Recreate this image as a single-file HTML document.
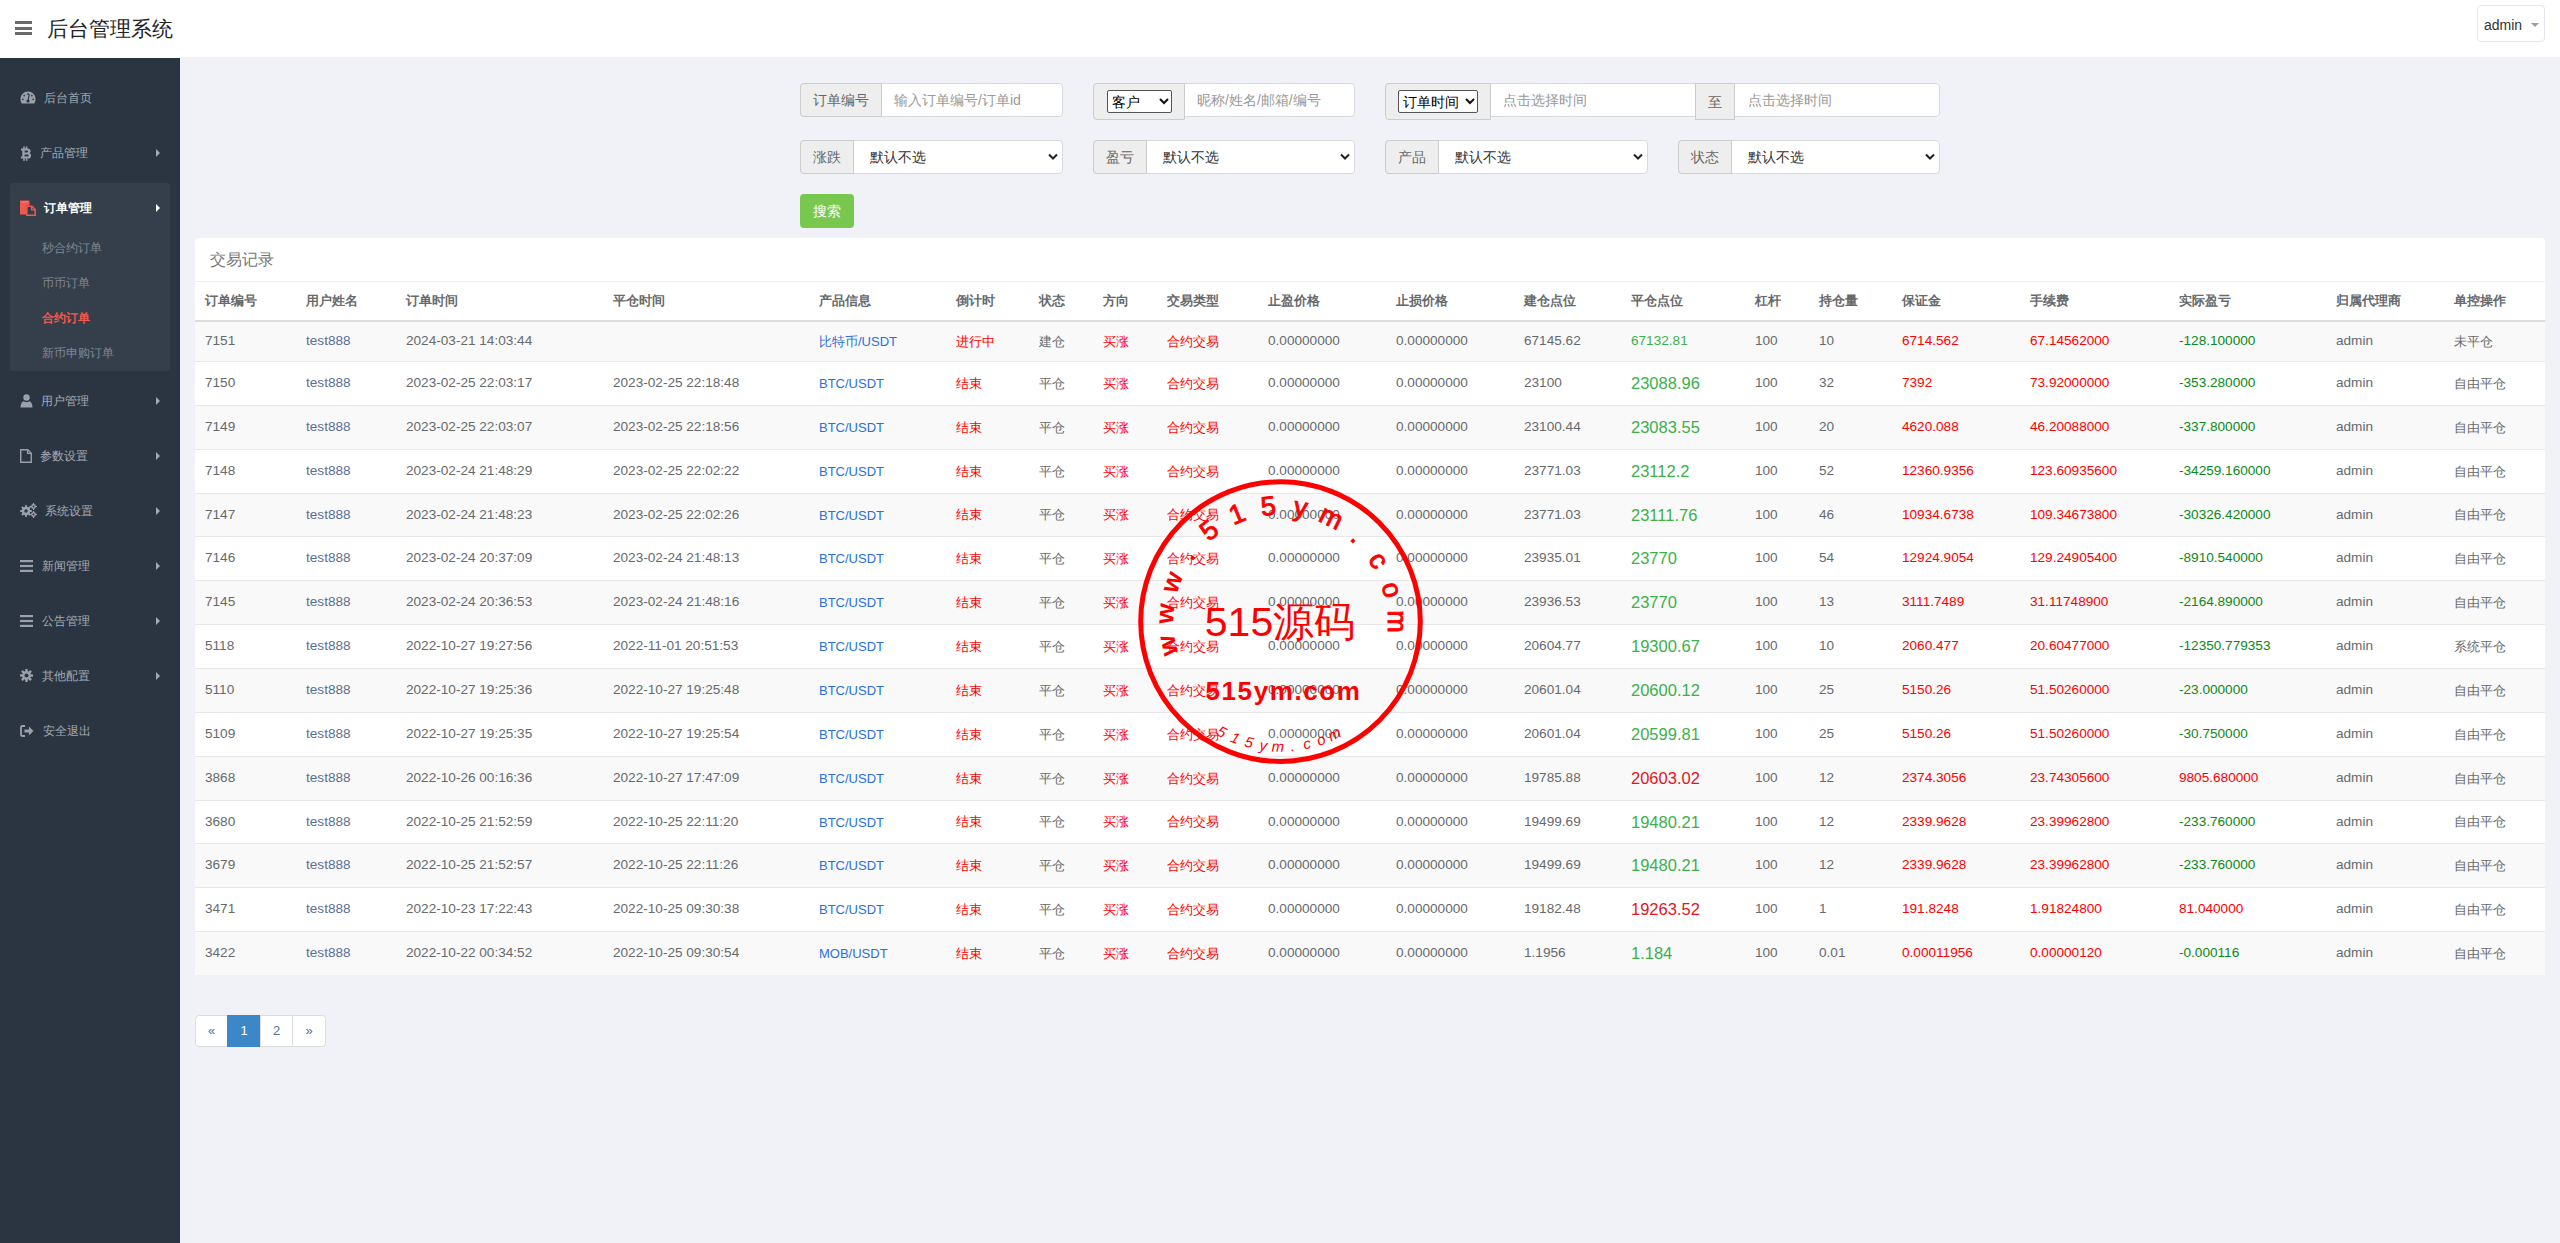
<!DOCTYPE html><html><head><meta charset="utf-8"><title>后台管理系统</title><style>
*{box-sizing:content-box}
html,body{margin:0;padding:0}
body{width:2560px;height:1243px;overflow:hidden;position:relative;background:#f0f2f7;font-family:"Liberation Sans",sans-serif;font-size:14px;color:#676a6c}
.hdr{position:absolute;left:0;top:0;width:2560px;height:57px;background:#fff}
.burger{position:absolute;left:15px;top:21px;width:17px;height:14px}
.burger i{position:absolute;left:0;width:17px;height:3px;background:#6a6a6a}
.title{position:absolute;left:47px;top:15px;font-size:21px;line-height:28px;color:#222}
.user{position:absolute;left:2477px;top:5px;width:66px;height:35px;border:1px solid #e4e6f0;border-radius:4px;background:#fff}
.user span{position:absolute;left:6px;top:11px;font-size:14px;line-height:16px;color:#333}
.user b{position:absolute;left:53px;top:17px;width:0;height:0;border-left:4px solid transparent;border-right:4px solid transparent;border-top:4px solid #9a9cb0}
.side{position:absolute;left:0;top:58px;width:180px;height:1185px;background:#2b3542}
.hl{position:absolute;left:0;top:57px;width:180px;height:1px;background:#fff}
.mi{position:absolute;left:0;width:180px;height:20px;font-size:12px;line-height:20px;color:#a4aab3}
.mi .ic{position:absolute;left:20px;top:2px;width:16px;height:16px}
.mi .tx{position:absolute;left:41px;top:0}
.mi .ar{position:absolute;left:156px;top:6px;width:0;height:0;border-top:4px solid transparent;border-bottom:4px solid transparent;border-left:4px solid #a4aab3}
.grp{position:absolute;left:10px;top:126px;width:160px;height:188px;background:#353f4c;border-radius:3px}
.sub{position:absolute;left:42px;font-size:12px;line-height:20px;color:#7f8893}
.sub.act{color:#f0594d;font-weight:bold}
.ig{position:absolute;height:34px;background:#fff;border:1px solid #d9d9d9;border-radius:4px;box-sizing:border-box}
.ig .ad{position:absolute;left:-1px;top:-1px;height:34px;background:#eee;border:1px solid #ccc;border-radius:4px 0 0 4px;box-sizing:border-box;color:#666;font-size:14px;line-height:32px;text-align:center}
.ig .ph{position:absolute;top:0;line-height:32px;color:#999;font-size:14px}
.ig .sv{position:absolute;top:0;line-height:32px;color:#333;font-size:14px}
.ig .chev{position:absolute;top:12px;width:10px;height:8px}
.nsel{position:absolute;top:6px;height:23px;border:1px solid #555;border-radius:2px;background:#fff;box-sizing:border-box;color:#000;font-size:14px;line-height:20px}
.nsel span{position:absolute;left:4px;top:1px}
.nsel svg{position:absolute;top:7px}
.btn{position:absolute;left:800px;top:194px;width:54px;height:34px;background:#78c850;border-radius:4px;color:#fff;font-size:14px;line-height:34px;text-align:center}
.panel{position:absolute;left:195px;top:238px;width:2350px;height:737px;background:#fff;border-radius:4px 4px 0 0}
.panel .ph{position:absolute;left:0;top:0;width:2350px;height:43px;border-bottom:1px solid #eef0f5;font-size:16px;line-height:43px;color:#777;text-indent:15px}
.thead .c{font-size:13px;top:0}
.thead{position:absolute;left:0;top:44px;width:2350px;height:38px;border-bottom:2px solid #ddd;display:flex;font-weight:bold;color:#676a6c;line-height:38px;font-size:13px}
.tr{position:absolute;left:0;width:2350px;display:flex;border-bottom:1px solid #e7e7e7;align-items:center}
.tr:last-child{border-bottom:0}
.tr.odd{background:#f9f9f9}
.tr.even{background:#fff}
.c{box-sizing:border-box;padding-left:10px;white-space:nowrap;overflow:visible;font-size:13.6px;position:relative;top:-1px}
.c.u{color:#5a6f92}
.c.b{color:#2a6fe0;font-size:13px;top:0}
.c.r{color:#f00}
.c.cpg{color:#3cb04a}
.c.cpr{color:#e5141e}
.c.zh{font-size:13px;top:0}
.c.big{font-size:16.5px;top:0}
.c.pg{color:#0a8a1a}
.c.pr{color:#f00}

.pager{position:absolute;left:195px;top:1015px;height:32px;display:flex}
.pager div{height:30px;border:1px solid #ddd;margin-left:-1px;background:#fff;line-height:30px;text-align:center;font-size:13px;color:#5a6f92;box-sizing:content-box}
.pager div:first-child{margin-left:0;border-radius:4px 0 0 4px}
.pager div:last-child{border-radius:0 4px 4px 0}
.pager div.act{background:#3c87c8;border-color:#3c87c8;color:#fff}
.stamp{position:absolute;left:1130px;top:470px;width:300px;height:300px}

</style></head><body>
<div class="hdr">
  <div class="burger"><i style="top:0"></i><i style="top:6px"></i><i style="top:11px"></i></div>
  <div class="title">后台管理系统</div>
  <div class="user"><span>admin</span><b></b></div>
</div>
<div class="side"></div><div class="hl"></div>
<!-- sidebar menu -->
<div class="mi" style="top:88px">
  <svg class="ic" style="left:20px;top:3px;width:16px;height:13px" viewBox="0 0 16 13"><path d="M8 0.5C3.9 0.5 0.5 3.8 0.5 8c0 1.9 0.5 3.3 1.2 4.5h12.6c0.7-1.2 1.2-2.6 1.2-4.5C15.5 3.8 12.1 0.5 8 0.5z" fill="#9aa1ab"/><circle cx="8" cy="3" r="0.9" fill="#2b3542"/><circle cx="4.2" cy="4.6" r="0.9" fill="#2b3542"/><circle cx="11.8" cy="4.6" r="0.9" fill="#2b3542"/><circle cx="2.8" cy="8.3" r="0.9" fill="#2b3542"/><circle cx="13.2" cy="8.3" r="0.9" fill="#2b3542"/><path d="M9.3 3.2L8.2 9" stroke="#2b3542" stroke-width="1.1"/><circle cx="8" cy="10" r="1.6" fill="#2b3542"/></svg>
  <span class="tx" style="left:44px">后台首页</span>
</div>
<div class="mi" style="top:143px">
  <svg class="ic" style="left:20px;top:3px;width:12px;height:15px" viewBox="0 0 12 15"><path d="M1 2.5h6.2c2.2 0 3.4 1 3.4 2.7 0 1.1-0.6 1.8-1.5 2.1 1.2 0.3 2 1.1 2 2.4 0 1.9-1.4 2.9-3.7 2.9H1v-2h1.3V4.5H1z M4.6 4.5v2.1h2.2c0.9 0 1.3-0.4 1.3-1.05S7.7 4.5 6.8 4.5z M4.6 8.5v2.1h2.5c1 0 1.5-0.4 1.5-1.05S8.1 8.5 7.1 8.5z" fill="#9aa1ab" fill-rule="evenodd"/><rect x="3.2" y="0.5" width="1.6" height="2.5" fill="#9aa1ab"/><rect x="5.8" y="0.5" width="1.6" height="2.5" fill="#9aa1ab"/><rect x="3.2" y="12.3" width="1.6" height="2.5" fill="#9aa1ab"/><rect x="5.8" y="12.3" width="1.6" height="2.5" fill="#9aa1ab"/></svg>
  <span class="tx" style="left:40px">产品管理</span><i class="ar"></i>
</div>
<div class="grp" style="top:183px"></div>
<div class="mi" style="top:198px">
  <svg class="ic" style="left:20px;top:2px;width:16px;height:16px" viewBox="0 0 16 16"><path d="M0 0.5h9.5v5H6v9H0z" fill="#f0594d"/><path d="M6.8 6.3h5.2l3.2 3.2v5.8H6.8z" fill="#353f4c" stroke="#f0594d" stroke-width="1.5"/><path d="M11.6 6.5v3.3h3.3" fill="none" stroke="#f0594d" stroke-width="1.3"/><rect x="1.5" y="1.5" width="6.5" height="0.9" fill="#ff8a80"/></svg>
  <span class="tx" style="left:44px;color:#fff;font-weight:bold">订单管理</span><i class="ar" style="border-left-color:#fff"></i>
</div>
<div class="sub" style="top:238px">秒合约订单</div>
<div class="sub" style="top:273px">币币订单</div>
<div class="sub act" style="top:308px">合约订单</div>
<div class="sub" style="top:343px">新币申购订单</div>
<div class="mi" style="top:391px">
  <svg class="ic" style="left:20px;top:3px;width:13px;height:14px" viewBox="0 0 13 14"><circle cx="6.5" cy="3.5" r="3.2" fill="#9aa1ab"/><path d="M0.5 13.5c0-4 1.6-6 3.2-6.3 0.8 0.6 1.7 0.9 2.8 0.9s2-0.3 2.8-0.9c1.6 0.3 3.2 2.3 3.2 6.3z" fill="#9aa1ab"/></svg>
  <span class="tx" style="left:41px">用户管理</span><i class="ar"></i>
</div>
<div class="mi" style="top:446px">
  <svg class="ic" style="left:20px;top:3px;width:12px;height:14px" viewBox="0 0 12 14"><path d="M0.75 0.75h7l3.5 3.5v9h-10.5z" fill="none" stroke="#9aa1ab" stroke-width="1.4"/><path d="M7.5 0.75v3.7h3.7" fill="none" stroke="#9aa1ab" stroke-width="1.2"/></svg>
  <span class="tx" style="left:40px">参数设置</span><i class="ar"></i>
</div>
<div class="mi" style="top:501px">
  <svg class="ic" style="left:20px;top:2px;width:17px;height:15px" viewBox="0 0 17 15"><g fill="#9aa1ab"><circle cx="6" cy="8" r="4.3"/><rect x="5" y="2.2" width="2" height="11.6"/><rect x="0.2" y="7" width="11.6" height="2"/><rect x="5" y="2.2" width="2" height="11.6" transform="rotate(45 6 8)"/><rect x="5" y="2.2" width="2" height="11.6" transform="rotate(-45 6 8)"/><circle cx="13.5" cy="3.5" r="2.4"/><rect x="12.9" y="0" width="1.2" height="7"/><rect x="10" y="2.9" width="7" height="1.2"/><circle cx="13.5" cy="11.5" r="2.4"/><rect x="12.9" y="8" width="1.2" height="7"/><rect x="10" y="10.9" width="7" height="1.2"/></g><circle cx="6" cy="8" r="1.7" fill="#2b3542"/><circle cx="13.5" cy="3.5" r="0.9" fill="#2b3542"/><circle cx="13.5" cy="11.5" r="0.9" fill="#2b3542"/></svg>
  <span class="tx" style="left:45px">系统设置</span><i class="ar"></i>
</div>
<div class="mi" style="top:556px">
  <svg class="ic" style="left:20px;top:4px;width:13px;height:12px" viewBox="0 0 13 12"><rect y="0" width="13" height="2.2" fill="#9aa1ab"/><rect y="4.9" width="13" height="2.2" fill="#9aa1ab"/><rect y="9.8" width="13" height="2.2" fill="#9aa1ab"/></svg>
  <span class="tx" style="left:42px">新闻管理</span><i class="ar"></i>
</div>
<div class="mi" style="top:611px">
  <svg class="ic" style="left:20px;top:4px;width:13px;height:12px" viewBox="0 0 13 12"><rect y="0" width="13" height="2.2" fill="#9aa1ab"/><rect y="4.9" width="13" height="2.2" fill="#9aa1ab"/><rect y="9.8" width="13" height="2.2" fill="#9aa1ab"/></svg>
  <span class="tx" style="left:42px">公告管理</span><i class="ar"></i>
</div>
<div class="mi" style="top:666px">
  <svg class="ic" style="left:20px;top:3px;width:13px;height:13px" viewBox="0 0 13 13"><g fill="#9aa1ab"><circle cx="6.5" cy="6.5" r="4.4"/><rect x="5.3" y="0" width="2.4" height="13"/><rect x="0" y="5.3" width="13" height="2.4"/><rect x="5.3" y="0" width="2.4" height="13" transform="rotate(45 6.5 6.5)"/><rect x="5.3" y="0" width="2.4" height="13" transform="rotate(-45 6.5 6.5)"/></g><circle cx="6.5" cy="6.5" r="2" fill="#2b3542"/></svg>
  <span class="tx" style="left:42px">其他配置</span><i class="ar"></i>
</div>
<div class="mi" style="top:721px">
  <svg class="ic" style="left:20px;top:4px;width:14px;height:12px" viewBox="0 0 14 12"><path d="M5 1H2.2C1.5 1 1 1.5 1 2.2v7.6C1 10.5 1.5 11 2.2 11H5" fill="none" stroke="#9aa1ab" stroke-width="1.8"/><path d="M4.5 4.5h4.5V1.5L13.5 6 9 10.5V7.5H4.5z" fill="#9aa1ab"/></svg>
  <span class="tx" style="left:43px">安全退出</span>
</div>

<!-- filter form -->
<div class="ig" style="left:800px;top:83px;width:263px">
  <div class="ad" style="width:82px">订单编号</div>
  <div class="ph" style="left:93px">输入订单编号/订单id</div>
</div>
<div class="ig" style="left:1093px;top:83px;width:262px">
  <div class="ad" style="width:92px;height:37px"></div>
  <div class="nsel" style="left:13px;width:65px"><span>客户</span><svg style="left:51px" width="10" height="7" viewBox="0 0 10 7"><path d="M1 1l4 4 4-4" fill="none" stroke="#111" stroke-width="2"/></svg></div>
  <div class="ph" style="left:103px">昵称/姓名/邮箱/编号</div>
</div>
<div class="ig" style="left:1385px;top:83px;width:555px">
  <div class="ad" style="width:106px;height:37px"></div>
  <div class="nsel" style="left:12px;width:80px"><span>订单时间</span><svg style="left:66px" width="10" height="7" viewBox="0 0 10 7"><path d="M1 1l4 4 4-4" fill="none" stroke="#111" stroke-width="2"/></svg></div>
  <div class="ph" style="left:117px">点击选择时间</div>
  <div class="ad" style="left:309px;width:40px;height:37px;border-radius:0;line-height:36px">至</div>
  <div class="ph" style="left:362px">点击选择时间</div>
</div>

<div class="ig" style="left:800px;top:140px;width:263px">
  <div class="ad" style="width:54px">涨跌</div>
  <div class="sv" style="left:69px">默认不选</div>
  <svg class="chev" style="left:247px" viewBox="0 0 10 8"><path d="M1 1.5l4 4 4-4" fill="none" stroke="#222" stroke-width="2"/></svg>
</div>
<div class="ig" style="left:1093px;top:140px;width:262px">
  <div class="ad" style="width:54px">盈亏</div>
  <div class="sv" style="left:69px">默认不选</div>
  <svg class="chev" style="left:246px" viewBox="0 0 10 8"><path d="M1 1.5l4 4 4-4" fill="none" stroke="#222" stroke-width="2"/></svg>
</div>
<div class="ig" style="left:1385px;top:140px;width:263px">
  <div class="ad" style="width:54px">产品</div>
  <div class="sv" style="left:69px">默认不选</div>
  <svg class="chev" style="left:247px" viewBox="0 0 10 8"><path d="M1 1.5l4 4 4-4" fill="none" stroke="#222" stroke-width="2"/></svg>
</div>
<div class="ig" style="left:1678px;top:140px;width:262px">
  <div class="ad" style="width:54px">状态</div>
  <div class="sv" style="left:69px">默认不选</div>
  <svg class="chev" style="left:246px" viewBox="0 0 10 8"><path d="M1 1.5l4 4 4-4" fill="none" stroke="#222" stroke-width="2"/></svg>
</div>
<div class="btn">搜索</div>

<div class="panel"><div class="ph">交易记录</div>
<div class="thead"><div class="c" style="width:101px">订单编号</div><div class="c" style="width:100px">用户姓名</div><div class="c" style="width:207px">订单时间</div><div class="c" style="width:206px">平仓时间</div><div class="c" style="width:137px">产品信息</div><div class="c" style="width:83px">倒计时</div><div class="c" style="width:64px">状态</div><div class="c" style="width:64px">方向</div><div class="c" style="width:101px">交易类型</div><div class="c" style="width:128px">止盈价格</div><div class="c" style="width:128px">止损价格</div><div class="c" style="width:107px">建仓点位</div><div class="c" style="width:124px">平仓点位</div><div class="c" style="width:64px">杠杆</div><div class="c" style="width:83px">持仓量</div><div class="c" style="width:128px">保证金</div><div class="c" style="width:149px">手续费</div><div class="c" style="width:157px">实际盈亏</div><div class="c" style="width:118px">归属代理商</div><div class="c" style="width:101px">单控操作</div></div>
<div class="tr odd" style="top:84px;height:39px"><div class="c " style="width:101px">7151</div><div class="c u" style="width:100px">test888</div><div class="c " style="width:207px">2024-03-21 14:03:44</div><div class="c " style="width:206px"></div><div class="c b" style="width:137px">比特币/USDT</div><div class="c r zh" style="width:83px">进行中</div><div class="c zh" style="width:64px">建仓</div><div class="c r zh" style="width:64px">买涨</div><div class="c r zh" style="width:101px">合约交易</div><div class="c " style="width:128px">0.00000000</div><div class="c " style="width:128px">0.00000000</div><div class="c " style="width:107px">67145.62</div><div class="c cpg" style="width:124px">67132.81</div><div class="c " style="width:64px">100</div><div class="c " style="width:83px">10</div><div class="c r" style="width:128px">6714.562</div><div class="c r" style="width:149px">67.14562000</div><div class="c pg" style="width:157px">-128.100000</div><div class="c " style="width:118px">admin</div><div class="c zh" style="width:101px">未平仓</div></div>
<div class="tr even" style="top:124px;height:43px"><div class="c " style="width:101px">7150</div><div class="c u" style="width:100px">test888</div><div class="c " style="width:207px">2023-02-25 22:03:17</div><div class="c " style="width:206px">2023-02-25 22:18:48</div><div class="c b" style="width:137px">BTC/USDT</div><div class="c r zh" style="width:83px">结束</div><div class="c zh" style="width:64px">平仓</div><div class="c r zh" style="width:64px">买涨</div><div class="c r zh" style="width:101px">合约交易</div><div class="c " style="width:128px">0.00000000</div><div class="c " style="width:128px">0.00000000</div><div class="c " style="width:107px">23100</div><div class="c cpg big" style="width:124px">23088.96</div><div class="c " style="width:64px">100</div><div class="c " style="width:83px">32</div><div class="c r" style="width:128px">7392</div><div class="c r" style="width:149px">73.92000000</div><div class="c pg" style="width:157px">-353.280000</div><div class="c " style="width:118px">admin</div><div class="c zh" style="width:101px">自由平仓</div></div>
<div class="tr odd" style="top:168px;height:43px"><div class="c " style="width:101px">7149</div><div class="c u" style="width:100px">test888</div><div class="c " style="width:207px">2023-02-25 22:03:07</div><div class="c " style="width:206px">2023-02-25 22:18:56</div><div class="c b" style="width:137px">BTC/USDT</div><div class="c r zh" style="width:83px">结束</div><div class="c zh" style="width:64px">平仓</div><div class="c r zh" style="width:64px">买涨</div><div class="c r zh" style="width:101px">合约交易</div><div class="c " style="width:128px">0.00000000</div><div class="c " style="width:128px">0.00000000</div><div class="c " style="width:107px">23100.44</div><div class="c cpg big" style="width:124px">23083.55</div><div class="c " style="width:64px">100</div><div class="c " style="width:83px">20</div><div class="c r" style="width:128px">4620.088</div><div class="c r" style="width:149px">46.20088000</div><div class="c pg" style="width:157px">-337.800000</div><div class="c " style="width:118px">admin</div><div class="c zh" style="width:101px">自由平仓</div></div>
<div class="tr even" style="top:212px;height:43px"><div class="c " style="width:101px">7148</div><div class="c u" style="width:100px">test888</div><div class="c " style="width:207px">2023-02-24 21:48:29</div><div class="c " style="width:206px">2023-02-25 22:02:22</div><div class="c b" style="width:137px">BTC/USDT</div><div class="c r zh" style="width:83px">结束</div><div class="c zh" style="width:64px">平仓</div><div class="c r zh" style="width:64px">买涨</div><div class="c r zh" style="width:101px">合约交易</div><div class="c " style="width:128px">0.00000000</div><div class="c " style="width:128px">0.00000000</div><div class="c " style="width:107px">23771.03</div><div class="c cpg big" style="width:124px">23112.2</div><div class="c " style="width:64px">100</div><div class="c " style="width:83px">52</div><div class="c r" style="width:128px">12360.9356</div><div class="c r" style="width:149px">123.60935600</div><div class="c pg" style="width:157px">-34259.160000</div><div class="c " style="width:118px">admin</div><div class="c zh" style="width:101px">自由平仓</div></div>
<div class="tr odd" style="top:256px;height:42px"><div class="c " style="width:101px">7147</div><div class="c u" style="width:100px">test888</div><div class="c " style="width:207px">2023-02-24 21:48:23</div><div class="c " style="width:206px">2023-02-25 22:02:26</div><div class="c b" style="width:137px">BTC/USDT</div><div class="c r zh" style="width:83px">结束</div><div class="c zh" style="width:64px">平仓</div><div class="c r zh" style="width:64px">买涨</div><div class="c r zh" style="width:101px">合约交易</div><div class="c " style="width:128px">0.00000000</div><div class="c " style="width:128px">0.00000000</div><div class="c " style="width:107px">23771.03</div><div class="c cpg big" style="width:124px">23111.76</div><div class="c " style="width:64px">100</div><div class="c " style="width:83px">46</div><div class="c r" style="width:128px">10934.6738</div><div class="c r" style="width:149px">109.34673800</div><div class="c pg" style="width:157px">-30326.420000</div><div class="c " style="width:118px">admin</div><div class="c zh" style="width:101px">自由平仓</div></div>
<div class="tr even" style="top:299px;height:43px"><div class="c " style="width:101px">7146</div><div class="c u" style="width:100px">test888</div><div class="c " style="width:207px">2023-02-24 20:37:09</div><div class="c " style="width:206px">2023-02-24 21:48:13</div><div class="c b" style="width:137px">BTC/USDT</div><div class="c r zh" style="width:83px">结束</div><div class="c zh" style="width:64px">平仓</div><div class="c r zh" style="width:64px">买涨</div><div class="c r zh" style="width:101px">合约交易</div><div class="c " style="width:128px">0.00000000</div><div class="c " style="width:128px">0.00000000</div><div class="c " style="width:107px">23935.01</div><div class="c cpg big" style="width:124px">23770</div><div class="c " style="width:64px">100</div><div class="c " style="width:83px">54</div><div class="c r" style="width:128px">12924.9054</div><div class="c r" style="width:149px">129.24905400</div><div class="c pg" style="width:157px">-8910.540000</div><div class="c " style="width:118px">admin</div><div class="c zh" style="width:101px">自由平仓</div></div>
<div class="tr odd" style="top:343px;height:43px"><div class="c " style="width:101px">7145</div><div class="c u" style="width:100px">test888</div><div class="c " style="width:207px">2023-02-24 20:36:53</div><div class="c " style="width:206px">2023-02-24 21:48:16</div><div class="c b" style="width:137px">BTC/USDT</div><div class="c r zh" style="width:83px">结束</div><div class="c zh" style="width:64px">平仓</div><div class="c r zh" style="width:64px">买涨</div><div class="c r zh" style="width:101px">合约交易</div><div class="c " style="width:128px">0.00000000</div><div class="c " style="width:128px">0.00000000</div><div class="c " style="width:107px">23936.53</div><div class="c cpg big" style="width:124px">23770</div><div class="c " style="width:64px">100</div><div class="c " style="width:83px">13</div><div class="c r" style="width:128px">3111.7489</div><div class="c r" style="width:149px">31.11748900</div><div class="c pg" style="width:157px">-2164.890000</div><div class="c " style="width:118px">admin</div><div class="c zh" style="width:101px">自由平仓</div></div>
<div class="tr even" style="top:387px;height:43px"><div class="c " style="width:101px">5118</div><div class="c u" style="width:100px">test888</div><div class="c " style="width:207px">2022-10-27 19:27:56</div><div class="c " style="width:206px">2022-11-01 20:51:53</div><div class="c b" style="width:137px">BTC/USDT</div><div class="c r zh" style="width:83px">结束</div><div class="c zh" style="width:64px">平仓</div><div class="c r zh" style="width:64px">买涨</div><div class="c r zh" style="width:101px">合约交易</div><div class="c " style="width:128px">0.00000000</div><div class="c " style="width:128px">0.00000000</div><div class="c " style="width:107px">20604.77</div><div class="c cpg big" style="width:124px">19300.67</div><div class="c " style="width:64px">100</div><div class="c " style="width:83px">10</div><div class="c r" style="width:128px">2060.477</div><div class="c r" style="width:149px">20.60477000</div><div class="c pg" style="width:157px">-12350.779353</div><div class="c " style="width:118px">admin</div><div class="c zh" style="width:101px">系统平仓</div></div>
<div class="tr odd" style="top:431px;height:43px"><div class="c " style="width:101px">5110</div><div class="c u" style="width:100px">test888</div><div class="c " style="width:207px">2022-10-27 19:25:36</div><div class="c " style="width:206px">2022-10-27 19:25:48</div><div class="c b" style="width:137px">BTC/USDT</div><div class="c r zh" style="width:83px">结束</div><div class="c zh" style="width:64px">平仓</div><div class="c r zh" style="width:64px">买涨</div><div class="c r zh" style="width:101px">合约交易</div><div class="c " style="width:128px">0.00000000</div><div class="c " style="width:128px">0.00000000</div><div class="c " style="width:107px">20601.04</div><div class="c cpg big" style="width:124px">20600.12</div><div class="c " style="width:64px">100</div><div class="c " style="width:83px">25</div><div class="c r" style="width:128px">5150.26</div><div class="c r" style="width:149px">51.50260000</div><div class="c pg" style="width:157px">-23.000000</div><div class="c " style="width:118px">admin</div><div class="c zh" style="width:101px">自由平仓</div></div>
<div class="tr even" style="top:475px;height:43px"><div class="c " style="width:101px">5109</div><div class="c u" style="width:100px">test888</div><div class="c " style="width:207px">2022-10-27 19:25:35</div><div class="c " style="width:206px">2022-10-27 19:25:54</div><div class="c b" style="width:137px">BTC/USDT</div><div class="c r zh" style="width:83px">结束</div><div class="c zh" style="width:64px">平仓</div><div class="c r zh" style="width:64px">买涨</div><div class="c r zh" style="width:101px">合约交易</div><div class="c " style="width:128px">0.00000000</div><div class="c " style="width:128px">0.00000000</div><div class="c " style="width:107px">20601.04</div><div class="c cpg big" style="width:124px">20599.81</div><div class="c " style="width:64px">100</div><div class="c " style="width:83px">25</div><div class="c r" style="width:128px">5150.26</div><div class="c r" style="width:149px">51.50260000</div><div class="c pg" style="width:157px">-30.750000</div><div class="c " style="width:118px">admin</div><div class="c zh" style="width:101px">自由平仓</div></div>
<div class="tr odd" style="top:519px;height:43px"><div class="c " style="width:101px">3868</div><div class="c u" style="width:100px">test888</div><div class="c " style="width:207px">2022-10-26 00:16:36</div><div class="c " style="width:206px">2022-10-27 17:47:09</div><div class="c b" style="width:137px">BTC/USDT</div><div class="c r zh" style="width:83px">结束</div><div class="c zh" style="width:64px">平仓</div><div class="c r zh" style="width:64px">买涨</div><div class="c r zh" style="width:101px">合约交易</div><div class="c " style="width:128px">0.00000000</div><div class="c " style="width:128px">0.00000000</div><div class="c " style="width:107px">19785.88</div><div class="c cpr big" style="width:124px">20603.02</div><div class="c " style="width:64px">100</div><div class="c " style="width:83px">12</div><div class="c r" style="width:128px">2374.3056</div><div class="c r" style="width:149px">23.74305600</div><div class="c pr" style="width:157px">9805.680000</div><div class="c " style="width:118px">admin</div><div class="c zh" style="width:101px">自由平仓</div></div>
<div class="tr even" style="top:563px;height:42px"><div class="c " style="width:101px">3680</div><div class="c u" style="width:100px">test888</div><div class="c " style="width:207px">2022-10-25 21:52:59</div><div class="c " style="width:206px">2022-10-25 22:11:20</div><div class="c b" style="width:137px">BTC/USDT</div><div class="c r zh" style="width:83px">结束</div><div class="c zh" style="width:64px">平仓</div><div class="c r zh" style="width:64px">买涨</div><div class="c r zh" style="width:101px">合约交易</div><div class="c " style="width:128px">0.00000000</div><div class="c " style="width:128px">0.00000000</div><div class="c " style="width:107px">19499.69</div><div class="c cpg big" style="width:124px">19480.21</div><div class="c " style="width:64px">100</div><div class="c " style="width:83px">12</div><div class="c r" style="width:128px">2339.9628</div><div class="c r" style="width:149px">23.39962800</div><div class="c pg" style="width:157px">-233.760000</div><div class="c " style="width:118px">admin</div><div class="c zh" style="width:101px">自由平仓</div></div>
<div class="tr odd" style="top:606px;height:43px"><div class="c " style="width:101px">3679</div><div class="c u" style="width:100px">test888</div><div class="c " style="width:207px">2022-10-25 21:52:57</div><div class="c " style="width:206px">2022-10-25 22:11:26</div><div class="c b" style="width:137px">BTC/USDT</div><div class="c r zh" style="width:83px">结束</div><div class="c zh" style="width:64px">平仓</div><div class="c r zh" style="width:64px">买涨</div><div class="c r zh" style="width:101px">合约交易</div><div class="c " style="width:128px">0.00000000</div><div class="c " style="width:128px">0.00000000</div><div class="c " style="width:107px">19499.69</div><div class="c cpg big" style="width:124px">19480.21</div><div class="c " style="width:64px">100</div><div class="c " style="width:83px">12</div><div class="c r" style="width:128px">2339.9628</div><div class="c r" style="width:149px">23.39962800</div><div class="c pg" style="width:157px">-233.760000</div><div class="c " style="width:118px">admin</div><div class="c zh" style="width:101px">自由平仓</div></div>
<div class="tr even" style="top:650px;height:43px"><div class="c " style="width:101px">3471</div><div class="c u" style="width:100px">test888</div><div class="c " style="width:207px">2022-10-23 17:22:43</div><div class="c " style="width:206px">2022-10-25 09:30:38</div><div class="c b" style="width:137px">BTC/USDT</div><div class="c r zh" style="width:83px">结束</div><div class="c zh" style="width:64px">平仓</div><div class="c r zh" style="width:64px">买涨</div><div class="c r zh" style="width:101px">合约交易</div><div class="c " style="width:128px">0.00000000</div><div class="c " style="width:128px">0.00000000</div><div class="c " style="width:107px">19182.48</div><div class="c cpr big" style="width:124px">19263.52</div><div class="c " style="width:64px">100</div><div class="c " style="width:83px">1</div><div class="c r" style="width:128px">191.8248</div><div class="c r" style="width:149px">1.91824800</div><div class="c pr" style="width:157px">81.040000</div><div class="c " style="width:118px">admin</div><div class="c zh" style="width:101px">自由平仓</div></div>
<div class="tr odd" style="top:694px;height:43px"><div class="c " style="width:101px">3422</div><div class="c u" style="width:100px">test888</div><div class="c " style="width:207px">2022-10-22 00:34:52</div><div class="c " style="width:206px">2022-10-25 09:30:54</div><div class="c b" style="width:137px">MOB/USDT</div><div class="c r zh" style="width:83px">结束</div><div class="c zh" style="width:64px">平仓</div><div class="c r zh" style="width:64px">买涨</div><div class="c r zh" style="width:101px">合约交易</div><div class="c " style="width:128px">0.00000000</div><div class="c " style="width:128px">0.00000000</div><div class="c " style="width:107px">1.1956</div><div class="c cpg big" style="width:124px">1.184</div><div class="c " style="width:64px">100</div><div class="c " style="width:83px">0.01</div><div class="c r" style="width:128px">0.00011956</div><div class="c r" style="width:149px">0.00000120</div><div class="c pg" style="width:157px">-0.000116</div><div class="c " style="width:118px">admin</div><div class="c zh" style="width:101px">自由平仓</div></div>
</div>
<div class="pager">
  <div style="width:31px">&laquo;</div>
  <div class="act" style="width:32px">1</div>
  <div style="width:31px">2</div>
  <div style="width:32px">&raquo;</div>
</div>

<svg class="stamp" viewBox="0 0 300 300" width="300" height="300">
<circle cx="150.5" cy="151.6" r="139.8" fill="none" stroke="#f00" stroke-width="5"/>
<text transform="translate(45.8 173.8) rotate(258.0)" text-anchor="middle" font-family="Liberation Sans" font-size="26" font-weight="bold" fill="#f00" stroke="#f00" stroke-width="0">w</text>
<text transform="translate(43.8 144.1) rotate(274.0)" text-anchor="middle" font-family="Liberation Sans" font-size="26" font-weight="bold" fill="#f00" stroke="#f00" stroke-width="0">w</text>
<text transform="translate(50.0 115.0) rotate(290.0)" text-anchor="middle" font-family="Liberation Sans" font-size="26" font-weight="bold" fill="#f00" stroke="#f00" stroke-width="0">w</text>
<text transform="translate(63.9 88.7) rotate(306.0)" text-anchor="middle" font-family="Liberation Sans" font-size="27" font-weight="normal" fill="#f00" stroke="#f00" stroke-width="0.9">.</text>
<text transform="translate(84.6 67.3) rotate(322.0)" text-anchor="middle" font-family="Liberation Sans" font-size="27" font-weight="normal" fill="#f00" stroke="#f00" stroke-width="0.9">5</text>
<text transform="translate(110.4 52.4) rotate(338.0)" text-anchor="middle" font-family="Liberation Sans" font-size="27" font-weight="normal" fill="#f00" stroke="#f00" stroke-width="0.9">1</text>
<text transform="translate(139.3 45.2) rotate(354.0)" text-anchor="middle" font-family="Liberation Sans" font-size="27" font-weight="normal" fill="#f00" stroke="#f00" stroke-width="0.9">5</text>
<text transform="translate(169.1 46.2) rotate(370.0)" text-anchor="middle" font-family="Liberation Sans" font-size="27" font-weight="normal" fill="#f00" stroke="#f00" stroke-width="0.9">y</text>
<text transform="translate(197.4 55.4) rotate(386.0)" text-anchor="middle" font-family="Liberation Sans" font-size="27" font-weight="normal" fill="#f00" stroke="#f00" stroke-width="0.9">m</text>
<text transform="translate(222.1 72.1) rotate(402.0)" text-anchor="middle" font-family="Liberation Sans" font-size="27" font-weight="normal" fill="#f00" stroke="#f00" stroke-width="0.9">.</text>
<text transform="translate(241.2 94.9) rotate(418.0)" text-anchor="middle" font-family="Liberation Sans" font-size="27" font-weight="normal" fill="#f00" stroke="#f00" stroke-width="0.9">c</text>
<text transform="translate(253.4 122.1) rotate(434.0)" text-anchor="middle" font-family="Liberation Sans" font-size="27" font-weight="normal" fill="#f00" stroke="#f00" stroke-width="0.9">o</text>
<text transform="translate(257.5 151.6) rotate(450.0)" text-anchor="middle" font-family="Liberation Sans" font-size="27" font-weight="normal" fill="#f00" stroke="#f00" stroke-width="0.9">m</text>
<text x="150.0" y="166" text-anchor="middle" font-family="Liberation Sans" font-size="41" fill="#f00">515源码</text>
<text x="153.5" y="229.5" text-anchor="middle" font-family="Liberation Sans" font-size="26" font-weight="bold" fill="#f00" letter-spacing="1.6">515ym.com</text>
<text transform="translate(89.5 266.4) rotate(28.0)" text-anchor="middle" font-family="Liberation Sans" font-size="15" font-style="italic" fill="#f00">5</text>
<text transform="translate(103.3 272.7) rotate(21.3)" text-anchor="middle" font-family="Liberation Sans" font-size="15" font-style="italic" fill="#f00">1</text>
<text transform="translate(117.7 277.4) rotate(14.6)" text-anchor="middle" font-family="Liberation Sans" font-size="15" font-style="italic" fill="#f00">5</text>
<text transform="translate(132.6 280.4) rotate(7.9)" text-anchor="middle" font-family="Liberation Sans" font-size="15" font-style="italic" fill="#f00">y</text>
<text transform="translate(147.8 281.6) rotate(1.2)" text-anchor="middle" font-family="Liberation Sans" font-size="15" font-style="italic" fill="#f00">m</text>
<text transform="translate(163.0 281.0) rotate(-5.5)" text-anchor="middle" font-family="Liberation Sans" font-size="15" font-style="italic" fill="#f00">.</text>
<text transform="translate(178.0 278.7) rotate(-12.2)" text-anchor="middle" font-family="Liberation Sans" font-size="15" font-style="italic" fill="#f00">c</text>
<text transform="translate(192.6 274.6) rotate(-18.9)" text-anchor="middle" font-family="Liberation Sans" font-size="15" font-style="italic" fill="#f00">o</text>
<text transform="translate(206.7 268.8) rotate(-25.6)" text-anchor="middle" font-family="Liberation Sans" font-size="15" font-style="italic" fill="#f00">m</text>
</svg>
</body></html>
